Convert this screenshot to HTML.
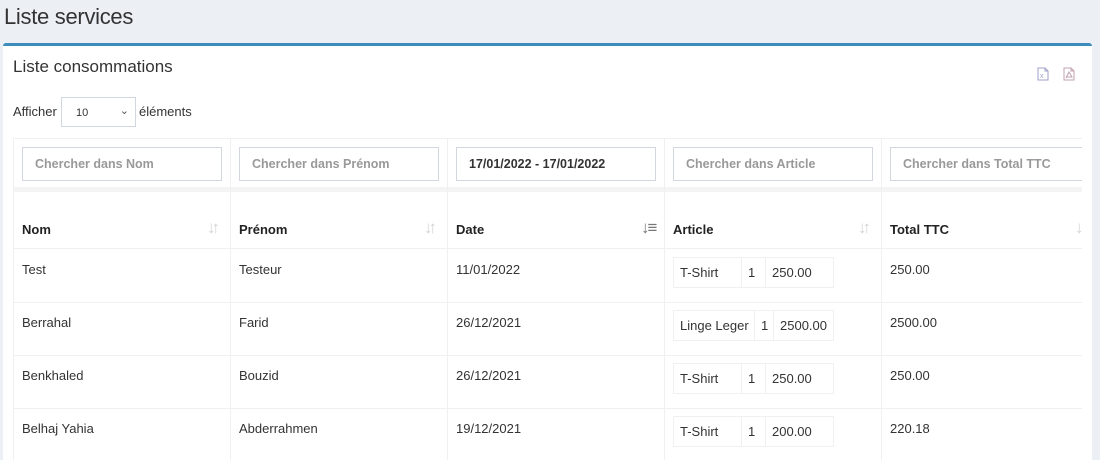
<!DOCTYPE html>
<html><head><meta charset="utf-8"><style>
*{box-sizing:border-box;margin:0;padding:0}
html,body{width:1100px;height:460px;overflow:hidden}
body{background:#ecf0f5;font-family:"Liberation Sans",sans-serif;color:#333;position:relative}
.a{position:absolute}
h1{position:absolute;left:4px;top:4px;font-size:22px;font-weight:normal;color:#333;letter-spacing:-0.3px}
.card{position:absolute;left:3px;top:43px;width:1089px;height:417px;background:#fff;border-top:3px solid #3c8dbc;border-radius:3px 3px 0 0}
.t{font-size:13px}
.vl{position:absolute;width:1px;background:#f0f0f0}
.hl{position:absolute;height:1px;background:#f0f0f0;left:13px;width:1069px}
.inp{position:absolute;height:34px;width:200px;border:1px solid #d2d6de;font-size:12.5px;font-weight:bold;color:#999;padding:9px 0 0 12px;background:#fff}
.th{position:absolute;top:222px;font-size:13px;font-weight:bold;color:#222}
.td{position:absolute;font-size:13px;color:#333}
.nt{position:absolute;height:31px;border:1px solid #f0f0f0;font-size:13px;display:flex}
.nt div{border-right:1px solid #f0f0f0;padding:7px 0 0 6px}
.nt div:last-child{border-right:none}
.sort{position:absolute;top:218px;font-size:17px;color:#d4d4d4;font-weight:bold;letter-spacing:-4px}
</style></head><body>
<h1>Liste services</h1>
<div class="card"></div>
<div class="a" style="left:13px;top:57px;font-size:17px;color:#333">Liste consommations</div>
<svg class="a" style="left:1037px;top:67px" width="12" height="14" viewBox="0 0 12 14"><path d="M1 1h7l3 3v9H1z M8 1v3h3" fill="none" stroke="#a0a0c8"/><text x="3" y="11" font-size="7" fill="#a0a0c8" font-family="Liberation Sans">x</text></svg>
<svg class="a" style="left:1063px;top:67px" width="12" height="14" viewBox="0 0 12 14"><path d="M1 1h7l3 3v9H1z M8 1v3h3 M3 11l3-6 3 5H3" fill="none" stroke="#c0a0b0"/></svg>
<div class="a t" style="left:13px;top:104px">Afficher</div>
<div class="a" style="left:61px;top:97px;width:75px;height:30px;border:1px solid #d2d6de;font-size:11px;padding:9px 0 0 14px">10<span style="position:absolute;right:6px;top:6px;font-size:11px;color:#555">&#8964;</span></div>
<div class="a t" style="left:139px;top:104px">éléments</div>

<div class="hl" style="top:138px"></div>
<div class="a" style="left:13px;top:187px;width:1069px;height:5px;background:#f4f4f4"></div>
<div class="hl" style="top:248px"></div>
<div class="hl" style="top:302px"></div>
<div class="hl" style="top:355px"></div>
<div class="hl" style="top:408px"></div>
<div class="vl" style="left:13px;top:138px;height:322px"></div>
<div class="vl" style="left:230px;top:138px;height:322px"></div>
<div class="vl" style="left:447px;top:138px;height:322px"></div>
<div class="vl" style="left:664px;top:138px;height:322px"></div>
<div class="vl" style="left:881px;top:138px;height:322px"></div>

<div class="inp" style="left:22px;top:147px">Chercher dans Nom</div>
<div class="inp" style="left:239px;top:147px">Chercher dans Prénom</div>
<div class="inp" style="left:456px;top:147px;color:#333">17/01/2022 - 17/01/2022</div>
<div class="inp" style="left:673px;top:147px">Chercher dans Article</div>
<div class="inp" style="left:890px;top:147px;width:192px;border-right:none">Chercher dans Total TTC</div>

<div class="th" style="left:22px">Nom</div><div class="sort" style="left:207px">&#8595;&#8593;</div>
<div class="th" style="left:239px">Prénom</div><div class="sort" style="left:424px">&#8595;&#8593;</div>
<div class="th" style="left:456px">Date</div><div class="sort" style="left:641px;color:#777;letter-spacing:-2px">&#8595;&#8801;</div>
<div class="th" style="left:673px">Article</div><div class="sort" style="left:858px">&#8595;&#8593;</div>
<div class="th" style="left:890px">Total TTC</div><div class="sort" style="left:1075px">&#8595;</div>

<div class="td" style="left:22px;top:262px">Test</div>
<div class="td" style="left:239px;top:262px">Testeur</div>
<div class="td" style="left:456px;top:262px">11/01/2022</div>
<div class="nt" style="left:673px;top:257px"><div style="width:68px">T-Shirt</div><div style="width:24px">1</div><div style="width:67px">250.00</div></div>
<div class="td" style="left:890px;top:262px">250.00</div>

<div class="td" style="left:22px;top:315px">Berrahal</div>
<div class="td" style="left:239px;top:315px">Farid</div>
<div class="td" style="left:456px;top:315px">26/12/2021</div>
<div class="nt" style="left:673px;top:310px"><div style="width:81px">Linge Leger</div><div style="width:19px">1</div><div style="width:59px">2500.00</div></div>
<div class="td" style="left:890px;top:315px">2500.00</div>

<div class="td" style="left:22px;top:368px">Benkhaled</div>
<div class="td" style="left:239px;top:368px">Bouzid</div>
<div class="td" style="left:456px;top:368px">26/12/2021</div>
<div class="nt" style="left:673px;top:363px"><div style="width:68px">T-Shirt</div><div style="width:24px">1</div><div style="width:67px">250.00</div></div>
<div class="td" style="left:890px;top:368px">250.00</div>

<div class="td" style="left:22px;top:421px">Belhaj Yahia</div>
<div class="td" style="left:239px;top:421px">Abderrahmen</div>
<div class="td" style="left:456px;top:421px">19/12/2021</div>
<div class="nt" style="left:673px;top:416px"><div style="width:68px">T-Shirt</div><div style="width:24px">1</div><div style="width:67px">200.00</div></div>
<div class="td" style="left:890px;top:421px">220.18</div>

<div class="a" style="left:1082px;top:138px;width:10px;height:322px;background:#fff"></div>
<div class="a" style="left:1092px;top:43px;width:8px;height:417px;background:#ecf0f5"></div>
</body></html>
